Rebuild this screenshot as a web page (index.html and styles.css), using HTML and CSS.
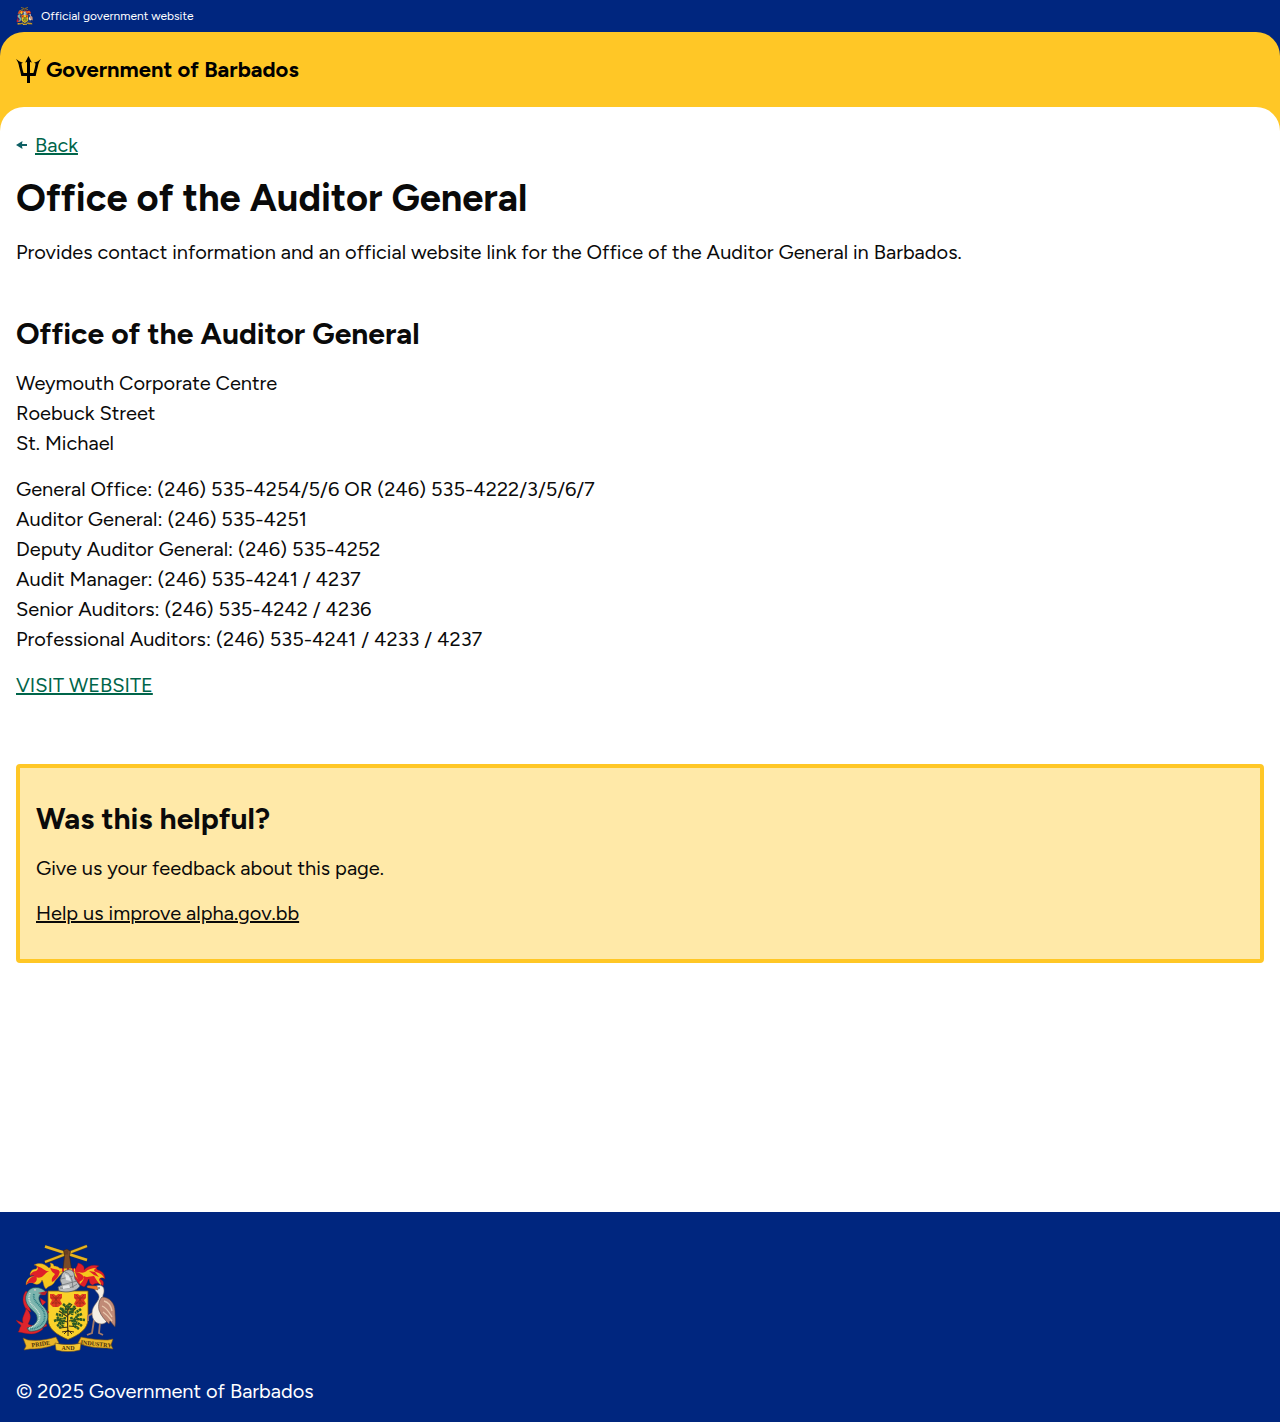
FILE: index.html
```html
<!DOCTYPE html>
<html lang="en">
<head>
<meta charset="utf-8">
<meta name="viewport" content="width=device-width, initial-scale=1">
<title>Office of the Auditor General - Government of Barbados</title>
<link rel="stylesheet" href="styles.css">
</head>
<body>
<div class="official">
  <svg class="official-crest" viewBox="0 0 100 108" aria-hidden="true"><use href="#crest"/></svg>
  <span>Official government website</span>
</div>

<div class="header-wrap">
  <header class="header">
    <a class="brand" href="#">
      <svg class="trident" viewBox="0 0 25 27" aria-hidden="true">
        <path d="M12.500 0 15.800 6.500 14 6v11h3.400C18.500 14 19.300 10 19.600 7.500l-1.600-.7C21 6 23 4.500 25 3c-2 2.500-2.600 5-3.200 8C21 14 20.200 17 19.700 20H14v7h-3v-7H5.300C4.800 17 4 14 3.200 11 2.600 8 2 5.500 0 3c2 1.500 4 3 7 3.800l-1.600.7C5.700 10 6.500 14 7.600 17H11V6l-1.800.5z"/>
      </svg>
      <span>Government of Barbados</span>
    </a>
  </header>
</div>

<div class="main-wrap">
  <main class="main">
    <a class="back" href="#">
      <svg class="arrow" viewBox="0 0 11 8" aria-hidden="true"><path d="M0 4 6.500 0 6 3h5v2H6l.5 3z"/></svg>
      <span class="back-text">Back</span>
    </a>
    <h1>Office of the Auditor General</h1>
    <p>Provides contact information and an official website link for the Office of the Auditor General in Barbados.</p>
    <section class="contact">
      <h2>Office of the Auditor General</h2>
      <p>Weymouth Corporate Centre<br>Roebuck Street<br>St. Michael</p>
      <p>General Office: (246) 535-4254/5/6 OR (246) 535-4222/3/5/6/7<br>Auditor General: (246) 535-4251<br>Deputy Auditor General: (246) 535-4252<br>Audit Manager: (246) 535-4241 / 4237<br>Senior Auditors: (246) 535-4242 / 4236<br>Professional Auditors: (246) 535-4241 / 4233 / 4237</p>
      <p><a class="link" href="#">VISIT WEBSITE</a></p>
    </section>
    <section class="feedback">
      <h2>Was this helpful?</h2>
      <p>Give us your feedback about this page.</p>
      <a class="feedback-link" href="#">Help us improve alpha.gov.bb</a>
    </section>
  </main>
</div>

<footer class="footer">
  <svg class="footer-crest" viewBox="0 0 100 108" role="img" aria-label="Coat of arms of Barbados">
    <g id="crest">
      <!-- crossed canes and arm -->
      <path d="M29 2.500 71 16M29 18 71 2" stroke="#5c4a1c" stroke-width="3.200"/>
      <path d="M29 2.500 71 16M29 18 71 2" stroke="#e6b422" stroke-width="2.400"/>
      <path d="M47.500 6.500 51 5l3.500 2.500-1 4.500 2 13h-8.500l1.500-13z" fill="#7a4a28" stroke="#3a2413" stroke-width=".6"/>
      <path d="M49 7v4M51 6.500v4" stroke="#3a2413" stroke-width=".5"/>
      <!-- mantling, left -->
      <path d="M47 28c-3-4-5-6-9-6 0-2-2-3-4-3 1 2 1 4-1 5-4-4-9-6-15-3 3 0 4 2 2 4-4 0-6 3-6 6 2-1 4-1 5 1-5 0-9 3-9 9 3-3 5-3 7-2 4 3 8 1 9-3 2 3 1 6 4 9 2-3 6-3 8-6 2-4 5-6 9-11z" fill="#f6c61d" stroke="#9d5a13" stroke-width=".4"/>
      <path d="M33 27c-4 1-6-4-13-5 3 2 2 4 0 5-3 0-6 3-6 5 3-1 5 0 6 1 2 1 5 1 7-1s3-3 6-5zM20 32c-4 0-7 2-10 9 3-3 5-2 7-2 3 0 5-3 3-7zM44 27c-5-3-7-1-10-4 1 4 3 6 5 7-2 3-4 4-3 8 4-2 7-6 8-11z" fill="#df1f28"/>
      <!-- mantling, right -->
      <path d="M56 28c3-2 5-5 6-9 4 1 7 3 6 7 4-4 9-6 15-4-3 1-3 3-1 4 4 1 7 4 7 9-2-1-4-2-5 0 4 2 4 4 3 7-4-4-8-3-10-1-3 0-4-4-4-6-2 2-2 6-5 8-3-2-7-3-9-7z" fill="#df1f28" stroke="#83151e" stroke-width=".4"/>
      <path d="M57 28c5-1 8 2 12 0 4-3 7-4 11-4-3 2-2 3 0 4 4 1 7 3 8 6-3-1-5 0-5 2 1 2 2 3 2 5-3-2-5-6-7-9-4 0-7 2-10 0 0 4-2 6-4 8-1-5-3-7-7-9z" fill="#f6c61d"/>
      <path d="M59 28c4 0 7 2 9 5-1 3-3 4-5 5zM73 27l6 1 4 5-5-2z" fill="#df1f28"/>
      <path d="M43 26h16" stroke="#df1f28" stroke-width="3"/>
      <path d="M43 26h16" stroke="#f6c61d" stroke-width="3" stroke-dasharray="3 2"/>
      <!-- shield -->
      <path d="M32 47h40v28c0 10-9 16-20 20.500C41 91 32 85 32 75z" fill="#fad12a" stroke="#7d5913" stroke-width=".8"/>
      <g id="crest-flower">
        <path d="M34 50h4l2 2 2-2h4v4l-2 2 2 4-4 3h-5l-3-3 2-4-2-2z" fill="#e0391f"/>
        <path d="m36 51 8 9m0-9-8 9M40 51v12M35 54h10M36 59h8" stroke="#8f2517" stroke-width=".6"/>
      </g>
      <use href="#crest-flower" x="24"/>
      <!-- helmet -->
      <path d="M46 30c3-5 10-6 12-1l1 6 5 7c-4 6-13 7-21 5l-1-4 4-2-2-5z" fill="#b9bcbd" stroke="#55595c" stroke-width=".8"/>
      <path d="m45 35 12-3M46 41l15-4M49 28c4 1 6 4 7 8l1 8M44 44c6 1 12 0 17-4" fill="none" stroke="#6f7376" stroke-width=".8"/>
      <path d="m49 30 4 2 2 5-5-1zM47 42l6-1 1 3-7 1z" fill="#e4e6e6"/>
      <!-- bearded fig tree -->
      <path d="M52 60c0 9-1 18 0 28M52 73l-9-6M52 78l-12-2M52 83l-8 1M52 71l8-7M53 77l12-2M53 82l9 1M52 67l-4-6M52 66l4-6" fill="none" stroke="#3b3316" stroke-width="1.200"/>
      <path d="m47 60 4 3m3-4-2 5m-8 0 5 4m10-6-4 5m10-2-6 4M40 70l7 2m-9 5 7-2m-4 7 6-4m-4 6 5-3m18-11-6 2m9 4-8-1m5 7-6-4m3 7-6-4M46 64l2 6m9-6-1 7M43 80l3-6m14 7-2-6M49 73l-2 7m8-7 3 8M41 73l5 5m17-8-5 6M50 64v6m5-6-1 6" fill="none" stroke="#2c5a24" stroke-width="2.600" stroke-dasharray="2.400 .5"/>
      <path d="m52 86-4 4m4-4v6m0-6 4 4m-4-3-6 1m6-1 6 1" stroke="#3b2a14" stroke-width="1"/>
      <!-- dolphin -->
      <path d="M25 47l6 1-2 3-5 0zM10 47c-4 5-4 12 0 18l5 3c-2-6-4-12 0-18zM24 54l6 4-4 4zM28 65l5 3-4 5zM29 77l2 5-5 2zM7 79l-7-3c2 4 5 4 5 6-2 2-1 4-3 6 8 1 17 5 25-3l-3-6c-5 4-8 3-12 1 3-5 4-10-2-16 0 5-5 9-3 15z" fill="#df242c" stroke="#83151e" stroke-width=".4"/>
      <path d="M13 46c-5 6-4 12 0 17 4 4 9 7 8 13-1 4-5 7-10 8l2 3c7 1 14-2 17-8 4-8 1-13-4-18-3-4-4-7-2-10l6-3c-3-4-12-7-17-2z" fill="#7cb5ae" stroke="#214f52" stroke-width=".7"/>
      <path d="M14 49c-2 5-1 9 3 13 5 5 8 8 6 14-2 4-6 7-10 8" fill="none" stroke="#d2e2d8" stroke-width="1.600" stroke-dasharray="1 .7"/>
      <path d="M18 50c-1 4 1 7 4 10 6 6 8 10 6 17-3 5-8 8-14 8" fill="none" stroke="#2f8085" stroke-width="1.800" stroke-dasharray="1 .7"/>
      <path d="m22 49 9-2-2 4z" fill="#b3202a"/>
      <circle cx="19" cy="46" r="1.100" fill="#fff"/><circle cx="19" cy="46" r=".5"/>
      <!-- pelican -->
      <path d="M78 76l-2 13-5 2M84 79l-1 10 4 2M77 69l-5 3v5" fill="none" stroke="#a37a68" stroke-width="1.800"/>
      <path d="M88 46c0-5-6-6-9-3-2 3 3 5 4 9 1 5-7 9-7 17 0 7 4 11 10 11 6-1 8-6 7-13-1-8-7-10-6-16 1-2 1-3 1-5z" fill="#f4eee4" stroke="#766c66" stroke-width=".6"/>
      <path d="m81 42-9-.5c-2 1-1 2.500 1 2.500l9 2z" fill="#ee7424" stroke="#74401d" stroke-width=".4"/>
      <path d="M86 53c8 0 13 7 13 14 0 6 1 9 0 16l-5-6-1 3c-4-4-8-8-10-14-1-5 0-10 3-13z" fill="#c08a76" stroke="#533b38" stroke-width=".6"/>
      <path d="M88 57c4 1 7 5 8 10M86 62c5 2 7 6 10 11M87 68c3 2 6 5 9 9" fill="none" stroke="#e9c8ae" stroke-width="1.300"/>
      <circle cx="83" cy="44" r=".7"/>
      <!-- motto ribbon -->
      <path d="M7 94l5 2c10 1 18 0 28-3l3 6c-9 4-18 6-29 6l-6 1 2-4zM97 95l-5 1c-10 0-17-1-27-3l-3 6c9 4 18 5 29 5l6 1-2-4z" fill="#eab52a" stroke="#765315" stroke-width=".6"/>
      <path d="M39 99c8 2 18 2 26 0l-1 7c-8 2-16 2-24 0z" fill="#f6c832" stroke="#765315" stroke-width=".6"/>
      <g class="motto" text-anchor="middle">
        <text x="25" y="102" transform="rotate(-8 25 102)">PRIDE</text>
        <text x="52" y="106">AND</text>
        <text x="80" y="102" transform="rotate(6 80 102)">INDUSTRY</text>
      </g>
    </g>
  </svg>
  <p>© 2025 Government of Barbados</p>
</footer>
</body>
</html>
```
FILE: styles.css
```css
* { box-sizing: border-box; }

body {
  margin: 0;
  min-height: 100vh;
  display: flex;
  flex-direction: column;
  background: #fff;
  color: #0a0a0a;
  font-family: Figtree, Lato, "Liberation Sans", sans-serif;
  font-size: 20px;
  line-height: 30px;
}

h1, h2, p { margin: 0; }
h1 { font-size: 38px; line-height: 46px; font-weight: 700; margin-top: 16px; }
h2 { font-size: 30px; line-height: 37px; font-weight: 700; }
h1 + p, h2 + p, p + p { margin-top: 16px; }

.motto { font-family: "Liberation Serif", serif; font-size: 6px; font-weight: 700; fill: #49300d; }

.official {
  display: flex;
  align-items: center;
  gap: 8px;
  height: 32px;
  padding: 0 16px;
  background: #00267f;
  color: #fff;
  font-size: 12px;
  line-height: 20px;
}
.official-crest { width: 17px; height: 18px; }

.header-wrap { background: #00267f; }
.header {
  padding: 20px 16px;
  background: #ffc726;
  border-radius: 24px 24px 0 0;
}
.brand {
  display: flex;
  align-items: center;
  gap: 5px;
  color: #000;
  font-size: 22px;
  font-weight: 700;
  line-height: 35px;
  text-decoration: none;
}
.trident { width: 25px; height: 27px; fill: #000; }

.main-wrap {
  flex: 1;
  background: linear-gradient(#ffc726 24px, #fff 24px);
}
.main {
  padding: 24px 16px;
  background: #fff;
  border-radius: 24px 24px 0 0;
}

.back {
  display: flex;
  width: fit-content;
  align-items: center;
  gap: 8px;
  color: #00654a;
  line-height: 28px;
  text-decoration: none;
}
.arrow { width: 11px; height: 8px; fill: #0e5f64; }
.back-text, .link, .feedback-link {
  text-decoration: underline;
  text-decoration-thickness: 2px;
  text-underline-offset: 1px;
}
.link { color: #00654a; }

.contact { margin-top: 48px; }
.feedback {
  margin-top: 64px;
  padding: 32px 16px;
  border: 4px solid #ffc726;
  border-radius: 4px;
  background: #ffe9a8;
}
.feedback-link { display: block; width: fit-content; margin-top: 16px; line-height: 28px; color: #0a0a0a; }

.footer {
  padding: 32px 16px 16px;
  background: #00267f;
  color: #fff;
}
.footer-crest { display: block; width: 100px; height: 108px; margin-bottom: 24px; }
```
